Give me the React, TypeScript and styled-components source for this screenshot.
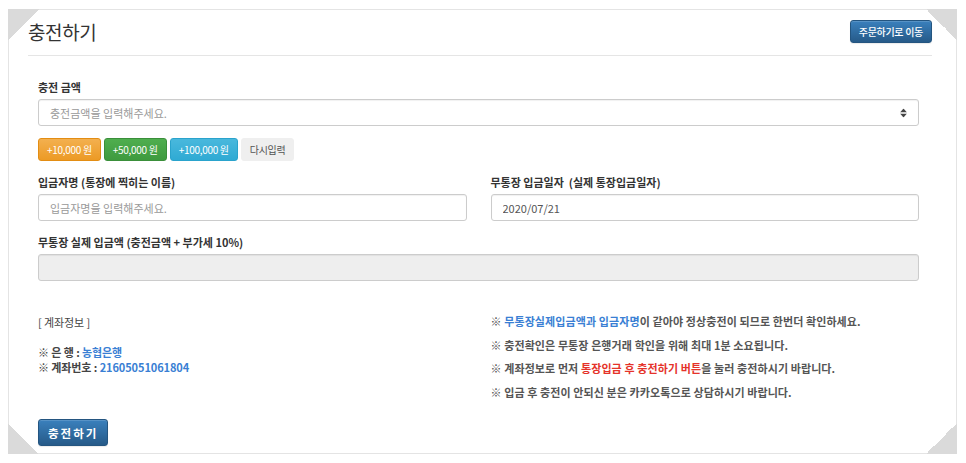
import styled, { createGlobalStyle } from 'styled-components';

const GlobalStyle = createGlobalStyle`
  html, body {
    margin: 0;
    padding: 0;
    background: #fff;
  }
  body {
    font-family: "Noto Sans CJK KR", "Noto Sans", sans-serif;
    color: #333;
  }
  * {
    box-sizing: border-box;
  }
`;

const Page = styled.div`
  padding: 9px 9px 9px 8px;
`;

const Card = styled.section`
  position: relative;
  border: 1px solid #e4e4e4;
  background: #fff;
  padding: 0 24px 0 19px;
`;

const Corner = styled.span<{ $at: 'tl' | 'tr' | 'bl' | 'br' }>`
  position: absolute;
  width: 31px;
  height: 31px;
  pointer-events: none;
  ${({ $at }) => ($at[0] === 't' ? 'top: -1px;' : 'bottom: -1px;')}
  ${({ $at }) => ($at[1] === 'l' ? 'left: -1px;' : 'right: -1px;')}
  background: ${({ $at }) =>
    $at === 'tl'
      ? 'linear-gradient(135deg, #dadada 50%, transparent 50%)'
      : $at === 'tr'
        ? 'linear-gradient(225deg, #dadada 50%, transparent 50%)'
        : $at === 'bl'
          ? 'linear-gradient(45deg, #dadada 50%, transparent 50%)'
          : 'linear-gradient(315deg, #dadada 50%, transparent 50%)'};
`;

const Header = styled.header`
  display: flex;
  align-items: center;
  justify-content: space-between;
  padding: 10px 0 12px;
  border-bottom: 1px solid #e5e5e5;
`;

const Title = styled.h1`
  margin: 0;
  font-size: 19px;
  font-weight: 400;
  line-height: 23px;
  color: #333;
  letter-spacing: -0.4px;
`;

const PrimaryButton = styled.button<{ $size?: 'sm' | 'md' }>`
  border: 1px solid #245580;
  border-radius: 3px;
  background: linear-gradient(to bottom, #3a80bd 0%, #265a88 100%);
  color: #fff;
  font-family: inherit;
  cursor: pointer;
  box-shadow: inset 0 1px 0 rgba(255, 255, 255, 0.15), 0 1px 1px rgba(0, 0, 0, 0.08);
  ${({ $size }) =>
    $size === 'md'
      ? `
    height: 27px;
    padding: 0 9px;
    font-size: 11.5px;
    font-weight: 700;
    letter-spacing: 2px;
  `
      : `
    height: 23px;
    padding: 0 8px;
    font-size: 10px;
    font-weight: 500;
    letter-spacing: -0.3px;
  `}
`;

const Body = styled.div`
  padding: 23px 13px 7px 10px;
`;

const Field = styled.div`
  display: flex;
  flex-direction: column;
  min-width: 0;
`;

const Label = styled.label`
  display: block;
  font-size: 11px;
  font-weight: 700;
  line-height: 17px;
  color: #333;
  letter-spacing: 0;
  margin-bottom: 3px;
`;

const InputWrap = styled.div`
  position: relative;
`;

const Input = styled.input`
  display: block;
  width: 100%;
  height: 27px;
  padding: 0 11px;
  border: 1px solid #ccc;
  border-radius: 3px;
  background: #fff;
  box-shadow: inset 0 1px 1px rgba(0, 0, 0, 0.06);
  font-family: inherit;
  font-size: 11px;
  color: #555;
  outline: none;
  &::placeholder {
    color: #999;
  }
  &:disabled {
    background: #eee;
  }
`;

const Spinner = styled.span`
  position: absolute;
  right: 12px;
  top: 50%;
  transform: translateY(-50%);
  display: flex;
  flex-direction: column;
  align-items: center;
  gap: 1px;
`;

const QuickRow = styled.div`
  display: flex;
  gap: 3px;
  margin: 12px 0 13px;
`;

const tones = {
  orange: { bg: 'linear-gradient(#f3b04f, #ec9a25)', border: '#e38d13', color: '#fff' },
  green: { bg: 'linear-gradient(#4fae4f, #3e9a3e)', border: '#3a8f3a', color: '#fff' },
  sky: { bg: 'linear-gradient(#49b8dd, #2faad3)', border: '#2aa3cc', color: '#fff' },
  plain: { bg: '#efefef', border: '#efefef', color: '#555' },
};

const QuickButton = styled.button<{ $tone: keyof typeof tones }>`
  height: 23px;
  padding: 0 8px;
  border-radius: 3px;
  border: 1px solid ${({ $tone }) => tones[$tone].border};
  background: ${({ $tone }) => tones[$tone].bg};
  color: ${({ $tone }) => tones[$tone].color};
  font-family: inherit;
  font-size: 10px;
  letter-spacing: -0.3px;
  cursor: pointer;
`;

const TwoCol = styled.div`
  display: grid;
  grid-template-columns: 1fr 1fr;
  column-gap: 24px;
  margin-bottom: 13px;
`;

const InfoGrid = styled.div`
  display: grid;
  grid-template-columns: 1fr 1fr;
  column-gap: 24px;
  margin-top: 33px;
`;

const Account = styled.div`
  font-size: 11px;
  line-height: 15px;
  color: #444;
  letter-spacing: -0.1px;
  padding-top: 1px;
`;

const AccountLine = styled.div<{ $gap?: boolean }>`
  margin-top: ${({ $gap }) => ($gap ? '15px' : '0')};
  font-weight: 700;
`;

const Plain = styled.span`
  font-weight: 400;
`;

const Notes = styled.ul`
  list-style: none;
  margin: 0;
  padding: 0;
  font-size: 11px;
  font-weight: 700;
  line-height: 15px;
  color: #555;
  letter-spacing: 0.1px;
`;

const Note = styled.li`
  margin-bottom: 8.7px;
`;

const Blue = styled.span`
  color: #3a7fd4;
  font-weight: 700;
`;

const Red = styled.span`
  color: #e5332a;
  font-weight: 700;
`;

const Footer = styled.div`
  margin-top: 10px;
`;

const App = () => (
  <>
    <GlobalStyle />
    <Page>
      <Card>
        <Corner $at="tl" />
        <Corner $at="tr" />
        <Corner $at="bl" />
        <Corner $at="br" />
        <Header>
          <Title>충전하기</Title>
          <PrimaryButton type="button">주문하기로 이동</PrimaryButton>
        </Header>
        <Body>
          <Field>
            <Label>충전 금액</Label>
            <InputWrap>
              <Input type="text" placeholder="충전금액을 입력해주세요." />
              <Spinner>
                <svg width="7" height="4" viewBox="0 0 7 4">
                  <path d="M0 4 L3.5 0 L7 4 Z" fill="#444" />
                </svg>
                <svg width="7" height="4" viewBox="0 0 7 4">
                  <path d="M0 0 L3.5 4 L7 0 Z" fill="#444" />
                </svg>
              </Spinner>
            </InputWrap>
          </Field>
          <QuickRow>
            <QuickButton $tone="orange">+10,000 원</QuickButton>
            <QuickButton $tone="green">+50,000 원</QuickButton>
            <QuickButton $tone="sky">+100,000 원</QuickButton>
            <QuickButton $tone="plain">다시입력</QuickButton>
          </QuickRow>
          <TwoCol>
            <Field>
              <Label>입금자명 (통장에 찍히는 이름)</Label>
              <Input type="text" placeholder="입금자명을 입력해주세요." />
            </Field>
            <Field>
              <Label>무통장 입금일자&nbsp;&nbsp;(실제 통장입금일자)</Label>
              <Input type="text" defaultValue="2020/07/21" readOnly />
            </Field>
          </TwoCol>
          <Field>
            <Label>무통장 실제 입금액 (충전금액 + 부가세 10%)</Label>
            <Input type="text" disabled />
          </Field>
          <InfoGrid>
            <Account>
              <AccountLine>
                <Plain>[ 계좌정보 ]</Plain>
              </AccountLine>
              <AccountLine $gap>
                ※ 은 행 : <Blue>농협은행</Blue>
              </AccountLine>
              <AccountLine>
                ※ 계좌번호 : <Blue>21605051061804</Blue>
              </AccountLine>
            </Account>
            <Notes>
              <Note>
                ※ <Blue>무통장실제입금액과 입금자명</Blue>이 같아야 정상충전이 되므로 한번더
                확인하세요.
              </Note>
              <Note>※ 충전확인은 무통장 은행거래 학인을 위해 최대 1분 소요됩니다.</Note>
              <Note>
                ※ 계좌정보로 먼저 <Red>통장입금 후 충전하기 버튼</Red>을 눌러 충전하시기
                바랍니다.
              </Note>
              <Note>※ 입금 후 충전이 안되신 분은 카카오톡으로 상담하시기 바랍니다.</Note>
            </Notes>
          </InfoGrid>
          <Footer>
            <PrimaryButton type="button" $size="md">
              충전하기
            </PrimaryButton>
          </Footer>
        </Body>
      </Card>
    </Page>
  </>
);

export default App;
